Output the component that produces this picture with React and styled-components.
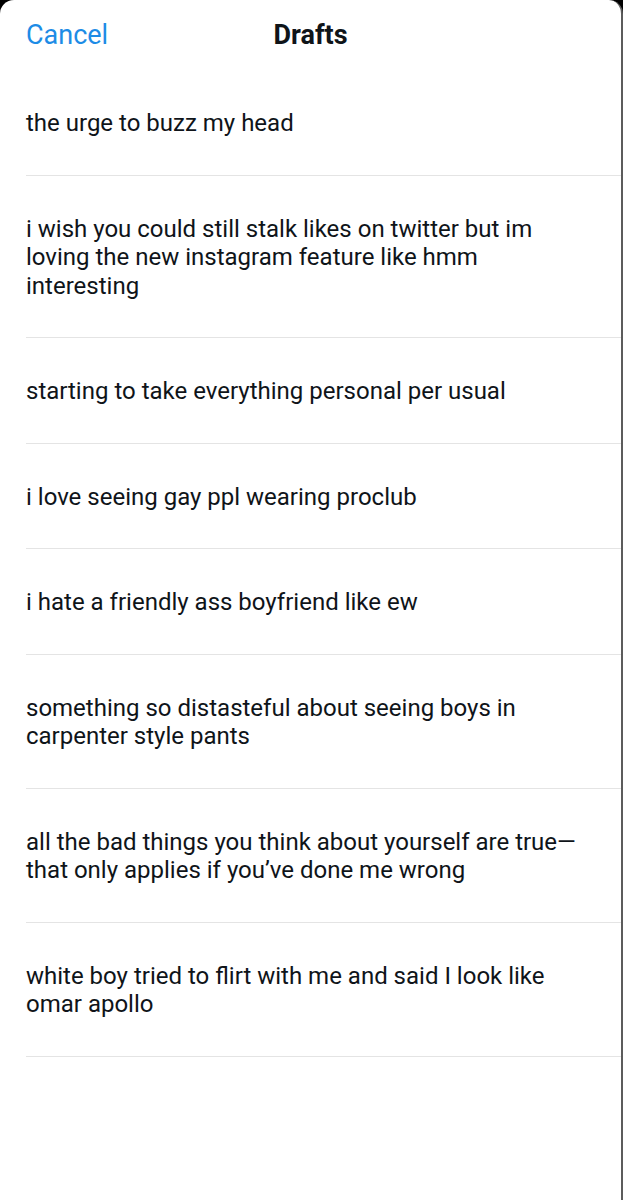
import React from 'react'
import styled, { createGlobalStyle } from 'styled-components'

const GlobalStyle = createGlobalStyle`
  html, body {
    margin: 0;
    padding: 0;
    background: #000;
  }
  body {
    font-family: Roboto, "Liberation Sans", sans-serif;
    -webkit-font-smoothing: antialiased;
  }
`

const Sheet = styled.div`
  min-height: 1200px;
  background: #fff;
  border-radius: 14px 14px 0 0;
  border-right: 2px solid #5c5c5c;
  box-sizing: border-box;
`

const Header = styled.div`
  height: 70px;
  display: grid;
  grid-template-columns: 1fr auto 1fr;
  align-items: center;
  padding: 0 26px;
`

const Cancel = styled.button`
  justify-self: start;
  border: none;
  background: none;
  padding: 0;
  font-family: inherit;
  font-size: 27px;
  color: #1d8ce6;
  cursor: pointer;
`

const Title = styled.h1`
  margin: 0;
  font-size: 27px;
  font-weight: 700;
  color: #0f1419;
`

const List = styled.ul`
  list-style: none;
  margin: 0;
  padding: 0 0 0 26px;
`

const Row = styled.li`
  padding: 39px 30px 37px 0;
  border-bottom: 1px solid #e4e4e4;
  font-size: 24px;
  line-height: 28.5px;
  color: #0f1419;
`

const drafts = [
  'the urge to buzz my head',
  'i wish you could still stalk likes on twitter but im loving the new instagram feature like hmm interesting',
  'starting to take everything personal per usual',
  'i love seeing gay ppl wearing proclub',
  'i hate a friendly ass boyfriend like ew',
  'something so distasteful about seeing boys in carpenter style pants',
  'all the bad things you think about yourself are true\u2014 that only applies if you\u2019ve done me wrong',
  'white boy tried to flirt with me and said I look like omar apollo',
]

const App = () => {
  return (
    <>
      <GlobalStyle />
      <Sheet>
        <Header>
          <Cancel>Cancel</Cancel>
          <Title>Drafts</Title>
        </Header>
        <List>
          {drafts.map((d, i) => (
            <Row key={i}>{d}</Row>
          ))}
        </List>
      </Sheet>
    </>
  )
}

export default App
